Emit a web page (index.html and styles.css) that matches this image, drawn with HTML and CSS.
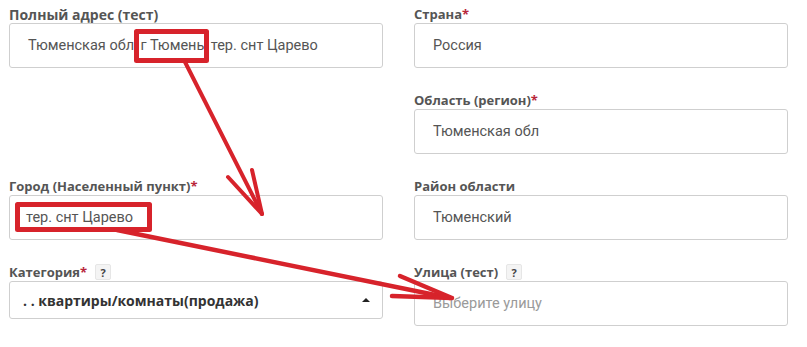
FILE: index.html
```html
<!DOCTYPE html>
<html lang="ru">
<head>
<meta charset="utf-8">
<title>Адрес</title>
<link rel="stylesheet" href="styles.css">
</head>
<body>
<div class="page">
  <div class="form">
    <div class="field">
      <div class="label label-lg">Полный адрес (тест)</div>
      <div class="input">Тюменская обл, г Тюмень, тер. снт Царево</div>
    </div>
    <div class="field">
      <div class="label">Страна<span class="req">*</span></div>
      <div class="input">Россия</div>
    </div>
    <div class="field empty"></div>
    <div class="field">
      <div class="label">Область (регион)<span class="req">*</span></div>
      <div class="input">Тюменская обл</div>
    </div>
    <div class="field">
      <div class="label">Город (Населенный пункт)<span class="req">*</span></div>
      <div class="input city">тер. снт Царево</div>
    </div>
    <div class="field">
      <div class="label">Район области</div>
      <div class="input">Тюменский</div>
    </div>
    <div class="field">
      <div class="label">Категория<span class="req">*</span><span class="help">?</span></div>
      <div class="select"><span>. . квартиры/комнаты(продажа)</span><span class="caret"></span></div>
    </div>
    <div class="field">
      <div class="label">Улица (тест)<span class="help">?</span></div>
      <div class="input placeholder">Выберите улицу</div>
    </div>
  </div>
  <svg class="marks" width="807" height="347" viewBox="0 0 807 347" xmlns="http://www.w3.org/2000/svg">
    <g fill="none" stroke="#d7232b" stroke-linecap="round" stroke-linejoin="round">
      <rect x="136.5" y="31.5" width="70" height="29" stroke-width="5"/>
      <rect x="17.5" y="204.5" width="132" height="25" stroke-width="5"/>
      <path d="M185 62 L262 214" stroke-width="4"/>
      <path d="M228 177 L262 214 M252 170 L262 214" stroke-width="4"/>
      <path d="M117 230 L450 298" stroke-width="4.5"/>
      <path d="M400 276 L452 298 M392 296 L452 298" stroke-width="4.5"/>
    </g>
  </svg>
</div>
</body>
</html>
```
FILE: styles.css
```css
html, body {
  margin: 0;
  padding: 0;
  background: #ffffff;
}
.page {
  position: relative;
  width: 807px;
  height: 347px;
  overflow: hidden;
  font-family: "Open Sans", "Liberation Sans", sans-serif;
}
.form {
  display: grid;
  grid-template-columns: 374px 374px;
  column-gap: 31px;
  padding: 5px 0 0 9px;
}
.field {
  display: flex;
  flex-direction: column;
  margin-bottom: 23px;
}
.field.empty {
  height: 63px;
}
.label {
  display: flex;
  align-items: center;
  height: 18px;
  font-size: 13px;
  font-weight: 700;
  color: #555555;
  white-space: nowrap;
}
.label-lg {
  font-size: 14px;
}
.req {
  color: #b8263a;
}
.help {
  display: inline-flex;
  align-items: center;
  justify-content: center;
  width: 16px;
  height: 16px;
  margin-left: 8px;
  background: #f4f4f4;
  border: 1px solid #e6e6e6;
  border-radius: 2px;
  box-sizing: border-box;
  font-size: 11px;
  font-weight: 700;
  color: #444444;
}
.input {
  box-sizing: border-box;
  height: 45px;
  border: 1px solid #cfcfcf;
  border-radius: 3px;
  padding: 0 16px 0 18px;
  display: flex;
  align-items: center;
  font-family: Roboto, "Open Sans", sans-serif;
  font-size: 14.5px;
  color: #555555;
  white-space: nowrap;
}
.input.city {
  padding-left: 16px;
}
.input.placeholder {
  color: #9a9a9a;
}
.select {
  box-sizing: border-box;
  height: 38px;
  border: 1px solid #cfcfcf;
  border-radius: 3px;
  padding: 0 12px 0 13px;
  display: flex;
  align-items: center;
  justify-content: space-between;
  font-size: 14px;
  font-weight: 700;
  color: #333333;
}
.caret {
  width: 0;
  height: 0;
  border-left: 4px solid transparent;
  border-right: 4px solid transparent;
  border-bottom: 4px solid #222222;
}
.marks {
  position: absolute;
  left: 0;
  top: 0;
  pointer-events: none;
}
```
